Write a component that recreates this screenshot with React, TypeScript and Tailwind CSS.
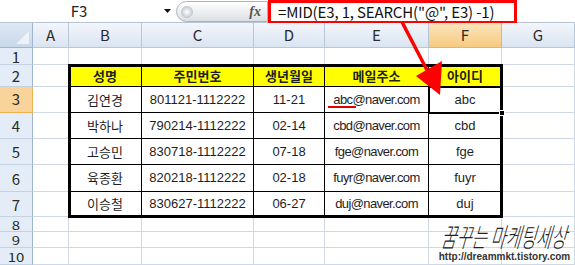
import React from "react";

const cols = ["A", "B", "C", "D", "E", "F", "G"];
const header = ["성명", "주민번호", "생년월일", "메일주소", "아이디"];
const data = [
  ["김연경", "801121-1112222", "11-21", "abc@naver.com", "abc"],
  ["박하나", "790214-1112222", "02-14", "cbd@naver.com", "cbd"],
  ["고승민", "830718-1112222", "07-18", "fge@naver.com", "fge"],
  ["육종환", "820218-1112222", "02-18", "fuyr@naver.com", "fuyr"],
  ["이승철", "830627-1112222", "06-27", "duj@naver.com", "duj"],
];

function cellContent(r: number, c: number): string {
  if (r === 2 && c >= 2 && c <= 6) return header[c - 2];
  if (r >= 3 && r <= 7 && c >= 2 && c <= 6) return data[r - 3][c - 2];
  return "";
}

export default function App() {
  const cells: React.ReactNode[] = [];
  for (let r = 0; r < 11; r++) {
    for (let c = 0; c < 8; c++) {
      const key = `${r}-${c}`;
      if (r === 0 && c === 0) {
        cells.push(
          <div key={key} className="relative border-r border-b border-[#9eb6ce] bg-linear-to-b from-[#dfe8f4] to-[#c9d8eb]">
            <svg className="absolute right-[3px] bottom-[3px]" width="13" height="13" viewBox="0 0 13 13">
              <polygon points="13,0 13,13 0,13" fill="#eef2f7" />
            </svg>
          </div>
        );
      } else if (r === 0) {
        const sel = c === 6;
        cells.push(
          <div
            key={key}
            className={
              sel
                ? "flex items-center justify-center border-r border-b border-[#f2b24d] bg-linear-to-b from-[#fbe4bb] to-[#f6cb80] text-[15px] text-[#2a2a2a] font-['Noto_Sans_CJK_KR',sans-serif]"
                : "flex items-center justify-center border-r border-b border-[#b6c7da] bg-linear-to-b from-[#f3f6fb] to-[#dae4f1] text-[15px] text-[#2a2a2a] font-['Noto_Sans_CJK_KR',sans-serif]"
            }
          >
            {cols[c - 1]}
          </div>
        );
      } else if (c === 0) {
        const sel = r === 3;
        const squish = r >= 8;
        cells.push(
          <div
            key={key}
            className={
              sel
                ? "flex items-center justify-center border-r border-b border-[#f2b24d] bg-[#f8d49a] text-[15px] text-[#2a2a2a] font-['Noto_Sans_CJK_KR',sans-serif]"
                : "flex items-center justify-center border-r border-b border-r-[#9eb6ce] border-b-[#c3d1e2] bg-[#e4ecf7] text-[15px] text-[#2a2a2a] font-['Noto_Sans_CJK_KR',sans-serif] leading-none"
            }
          >
            <span className={squish ? "inline-block scale-y-[0.8]" : "inline-block"}>{r}</span>
          </div>
        );
      } else {
        const inTable = r >= 2 && r <= 7 && c >= 2 && c <= 6;
        const isHead = r === 2 && inTable;
        const text = cellContent(r, c);
        let cls =
          "flex items-center justify-center border-r border-b border-[#d0d7e5] bg-white";
        if (inTable && isHead && c === 6)
          cls =
            "flex items-center justify-center border-r border-b border-black border-b-[#2a4fd0] bg-[#ffff00] text-[13px] font-bold text-[#1e1e1e] font-['Noto_Sans_CJK_KR',sans-serif]";
        else if (inTable && isHead)
          cls =
            "flex items-center justify-center border-r border-b border-black bg-[#ffff00] text-[13px] font-bold text-[#1e1e1e] font-['Noto_Sans_CJK_KR',sans-serif]";
        else if (inTable && c === 2)
          cls =
            "flex items-center justify-center border-r border-b border-black bg-white text-[13px] text-[#1e1e1e] font-['Noto_Sans_CJK_KR',sans-serif]";
        else if (inTable && c === 5)
          cls =
            "flex items-center justify-center border-r border-b border-black bg-white text-[13px] tracking-[-0.6px] text-[#1e1e1e] font-['Liberation_Sans',sans-serif]";
        else if (inTable)
          cls =
            "flex items-center justify-center border-r border-b border-black bg-white text-[13px] text-[#1e1e1e] font-['Liberation_Sans',sans-serif]";
        cells.push(
          <div key={key} className={cls}>
            {text}
          </div>
        );
      }
    }
  }

  return (
    <div className="relative w-[575px] h-[265px] overflow-hidden bg-white">
      {/* formula bar */}
      <div className="flex h-[23px] border-b border-[#b7c4d5] bg-white">
        <div className="w-[158px] flex items-center justify-center text-[15px] text-[#222] font-['Noto_Sans_CJK_KR',sans-serif]">
          F3
        </div>
        <div className="w-[18px] flex items-center justify-center">
          <svg width="7" height="4" viewBox="0 0 7 4">
            <polygon points="0,0 7,0 3.5,4" fill="#111" />
          </svg>
        </div>
        <div className="relative w-[92px] h-[21px] mt-px rounded-l-full border border-[#a9b2bd] bg-linear-to-b from-[#ffffff] to-[#dcdfe3] flex items-center justify-between pl-[4px] pr-[6px]">
          <div className="w-[12px] h-[12px] rounded-full bg-radial from-[#ffffff] to-[#b9bfc6] border border-[#c4c9cf]" />
          <span className="text-[14px] italic font-bold text-[#555] font-['Liberation_Serif',serif]">fx</span>
        </div>
        <div className="w-[249px] h-[24px] border-[3px] border-[#ff0000] flex items-center pl-[7px] text-[15px] tracking-[-0.15px] text-[#111] whitespace-nowrap font-['Noto_Sans_CJK_KR',sans-serif]">
          =MID(E3, 1, SEARCH("@", E3) -1)
        </div>
      </div>

      {/* sheet */}
      <div className="relative grid grid-cols-[33px_36px_73px_112px_71px_104px_73px_73px] grid-rows-[25px_17px_22px_26px_26px_26px_27px_25px_15px_16px_17px]">
        {cells}
        <div className="absolute -inset-px col-start-3 col-end-8 row-start-3 row-end-9 border-[3px] border-black pointer-events-none" />
        <div className="absolute -left-px -top-px -right-px -bottom-px col-start-7 col-end-8 row-start-4 row-end-5 border-2 border-black pointer-events-none">
          <div className="absolute -right-[4px] -bottom-[4px] w-[6px] h-[6px] bg-black border border-white" />
        </div>
      </div>

      {/* annotations */}
      <svg className="absolute left-0 top-0 pointer-events-none" width="575" height="265" viewBox="0 0 575 265">
        <line x1="402" y1="22" x2="428" y2="72" stroke="#ff0000" strokeWidth="3.5" />
        <polygon points="416,76 442,61 440,95" fill="#ff0000" />
        <line x1="328" y1="107" x2="356" y2="107" stroke="#e00000" strokeWidth="2" />
      </svg>

      {/* watermark */}
      <div className="absolute left-[434px] top-[228px] w-[141px] flex flex-col items-center pointer-events-none">
        <span className="whitespace-nowrap text-[16.5px] italic font-light text-[#222] -skew-x-12 scale-y-[1.6] font-['Noto_Sans_CJK_KR',sans-serif] leading-none">
          꿈꾸는 마케팅세상
        </span>
        <span className="mt-[7px] whitespace-nowrap text-[10px] font-bold text-[#333] font-['Liberation_Sans',sans-serif] leading-none">
          http://dreammkt.tistory.com
        </span>
      </div>
    </div>
  );
}
